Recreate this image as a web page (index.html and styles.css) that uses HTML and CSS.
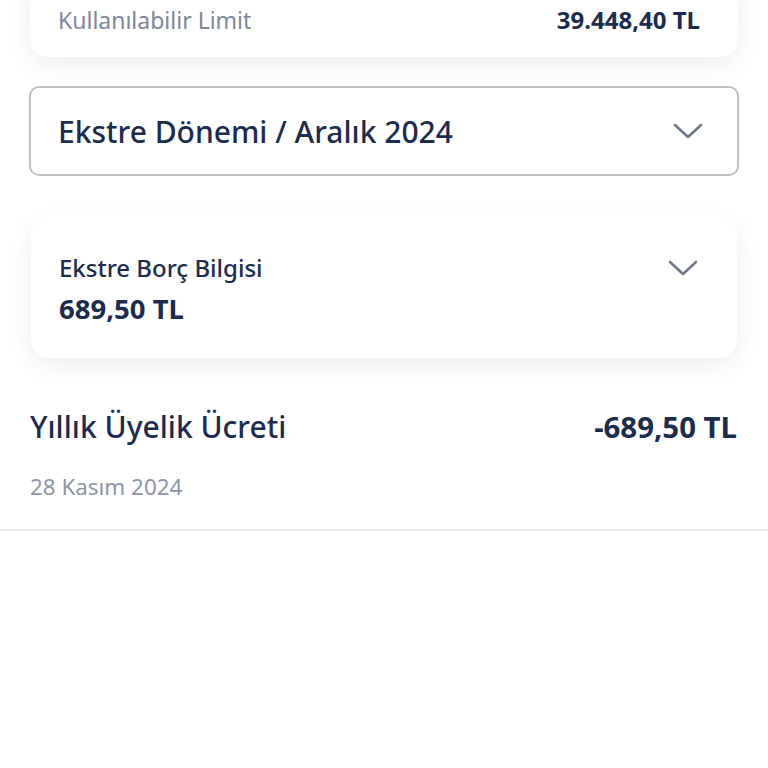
FILE: index.html
```html
<!DOCTYPE html>
<html lang="tr">
  <head>
    <meta charset="UTF-8" />
    <meta name="viewport" content="width=device-width, initial-scale=1.0" />
    <title>Ekstre</title>
    <link rel="stylesheet" href="styles.css">
  </head>
  <body>
    <div class="top">
      <div class="card limit-card">
        <span class="limit-label">Kullanılabilir Limit</span>
        <span class="limit-value">39.448,40 TL</span>
      </div>

      <div class="period-select">
        <span>Ekstre Dönemi / Aralık 2024</span>
        <svg class="chevron" width="30" height="16" viewBox="0 0 30 16">
          <path d="M2 2 L15 14 L28 2" />
        </svg>
      </div>

      <div class="card debt-card">
        <div class="debt-info">
          <span class="debt-label">Ekstre Borç Bilgisi</span>
          <span class="debt-value">689,50 TL</span>
        </div>
        <svg class="chevron" width="30" height="16" viewBox="0 0 30 16">
          <path d="M2 2 L15 14 L28 2" />
        </svg>
      </div>
    </div>

    <div class="transaction">
      <div class="transaction-row">
        <span class="transaction-title">Yıllık Üyelik Ücreti</span>
        <span class="transaction-amount">-689,50 TL</span>
      </div>
      <span class="transaction-date">28 Kasım 2024</span>
    </div>
  </body>
</html>
```

FILE: styles.css
```css
* {
  margin: 0;
  padding: 0;
  box-sizing: border-box;
  font-family: "Noto Sans", "Open Sans", sans-serif;
}

body {
  background-color: #fff;
  color: #1b2c4e;
}

/* Top area with cards */
.top {
  padding: 0 30px 24px;
  display: flex;
  flex-direction: column;
}

.card {
  background: #fff;
  border-radius: 18px;
  box-shadow: 0 8px 24px rgba(0, 0, 0, 0.07);
}

.limit-card {
  margin-top: -40px;
  height: 97px;
  padding: 45px 38px 0 28px;
  display: flex;
  justify-content: space-between;
  align-items: flex-start;
}

.limit-card span {
  line-height: 30px;
}

.limit-label {
  color: #7d879a;
  font-size: 23px;
}

.limit-value {
  font-size: 24px;
  font-weight: 700;
}

/* Period dropdown */
.period-select {
  margin: 29px -1px 0;
  height: 90px;
  border: 2px solid #bcc0c7;
  border-radius: 10px;
  display: flex;
  justify-content: space-between;
  align-items: center;
  padding: 0 34px 0 27px;
}

.period-select span {
  font-size: 30px;
  font-weight: 500;
}

.chevron path {
  fill: none;
  stroke: #6f7888;
  stroke-width: 2.6;
  stroke-linecap: round;
  stroke-linejoin: round;
}

/* Debt info card */
.debt-card {
  margin: 40px 1px 0;
  height: 142px;
  display: flex;
  justify-content: space-between;
  align-items: flex-start;
  padding: 37px 39px 0 28px;
}

.debt-card .chevron {
  margin-top: 7px;
}

.debt-info {
  display: flex;
  flex-direction: column;
  gap: 10px;
}

.debt-label {
  font-size: 24px;
  font-weight: 500;
  line-height: 30px;
}

.debt-value {
  font-size: 27.5px;
  font-weight: 700;
  line-height: 32px;
}

/* Transaction row */
.transaction {
  padding: 27px 31px 28px 30px;
  border-bottom: 2px solid #ebebeb;
  display: flex;
  flex-direction: column;
  gap: 28px;
}

.transaction-row {
  display: flex;
  justify-content: space-between;
  align-items: center;
}

.transaction-title {
  font-size: 30px;
  font-weight: 500;
  line-height: 36px;
}

.transaction-amount {
  font-size: 29.4px;
  font-weight: 700;
  line-height: 36px;
}

.transaction-date {
  color: #8d95a5;
  font-size: 22.4px;
  line-height: 28px;
}
```
